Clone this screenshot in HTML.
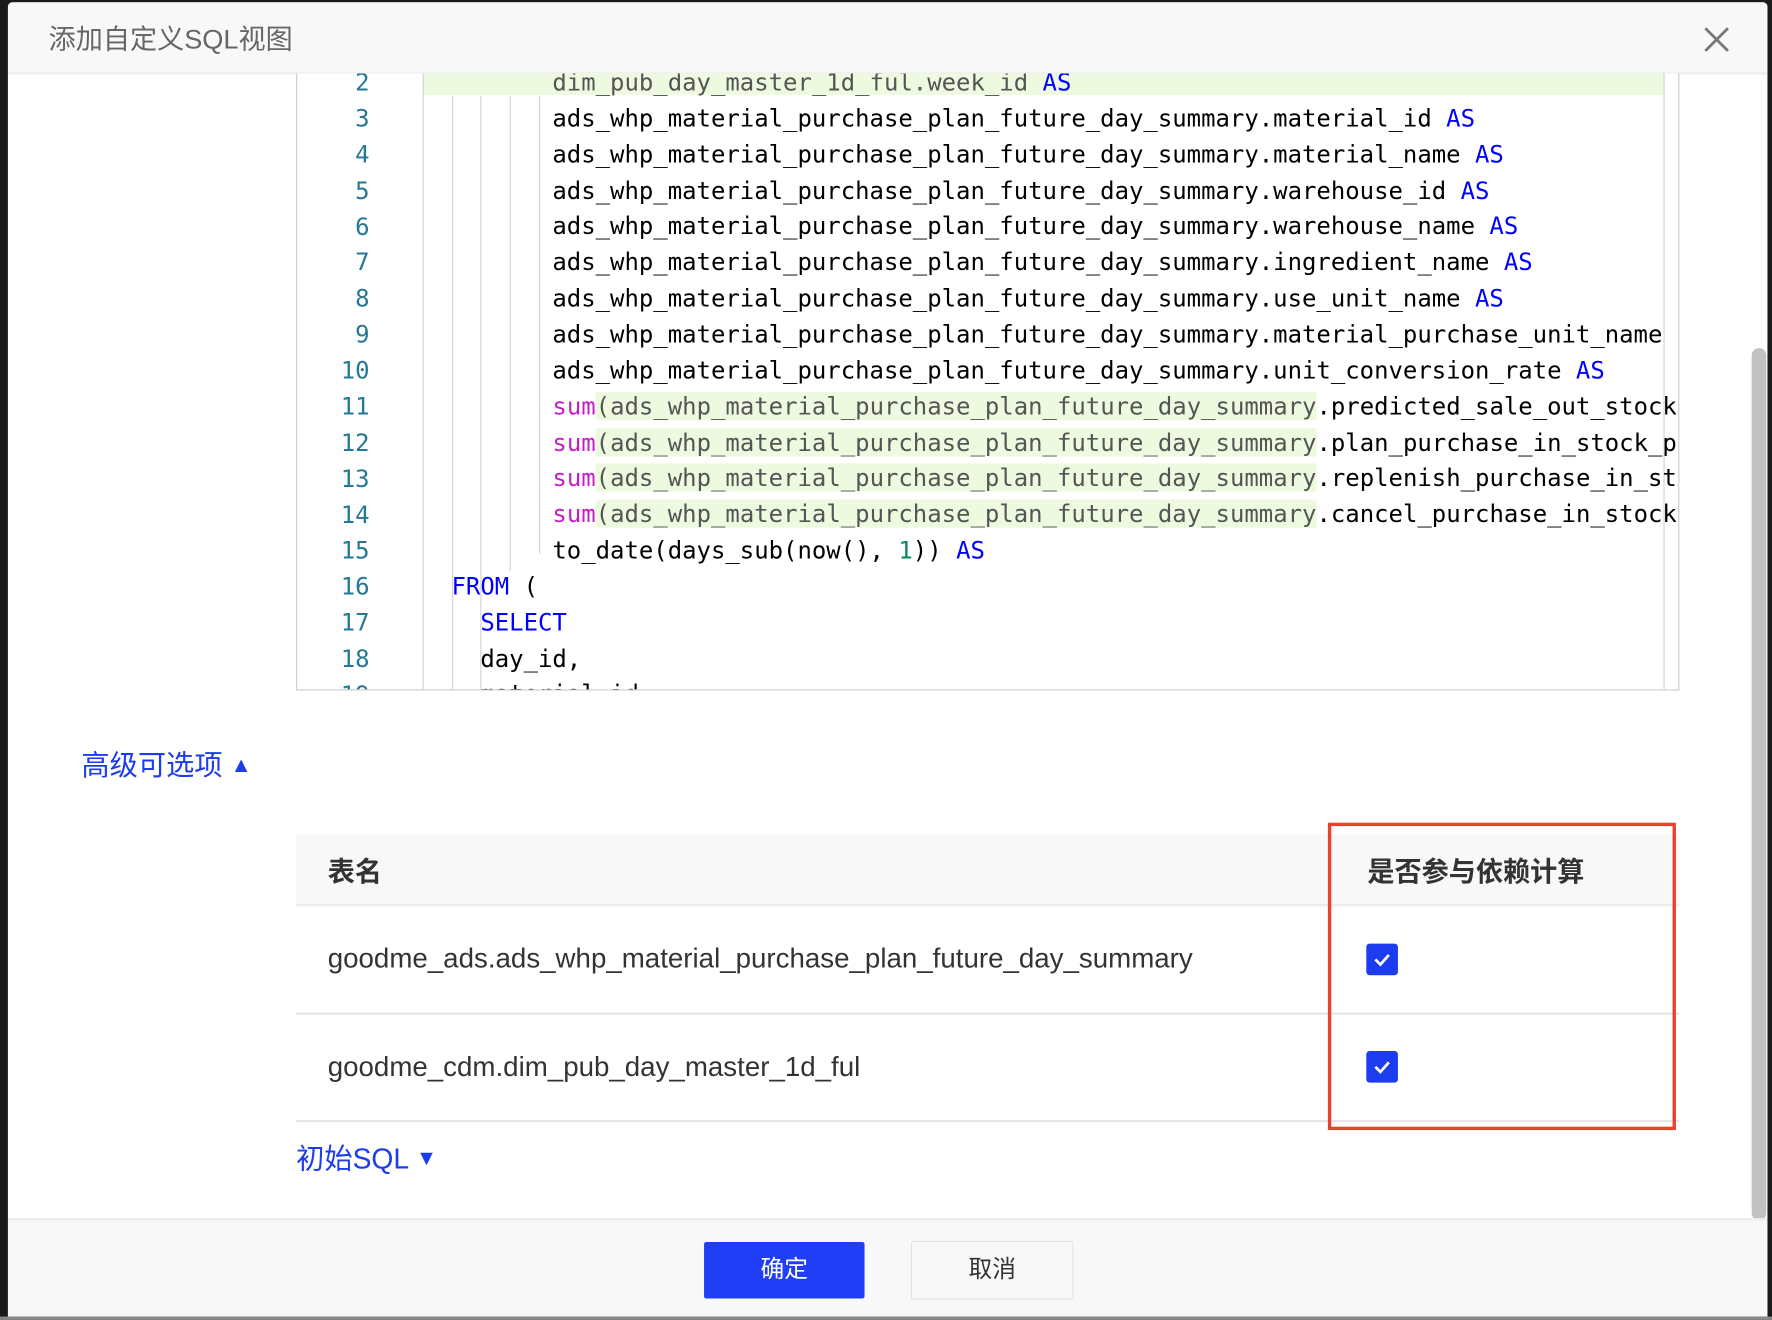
<!DOCTYPE html>
<html><head><meta charset="utf-8"><style>
html,body{margin:0;padding:0;width:1772px;height:1320px;overflow:hidden;background:#6b6b6b;}
#w{position:absolute;left:0;top:0;width:1568px;height:1168px;transform:scale(1.13010);transform-origin:0 0;background:#1a1a1a;font-family:"Liberation Sans","Noto Sans CJK SC",sans-serif;}
.dlg{position:absolute;left:7px;top:2px;width:1557px;height:1163px;background:#fff;border-radius:4px 4px 0 0;overflow:hidden;}
.hd{position:absolute;left:0;top:0;right:0;height:62px;background:#f8f8f9;border-bottom:2px solid #eee;}
.hd .t{position:absolute;left:36px;top:13px;font-size:24px;color:#666;}
.x{position:absolute;left:1500px;top:21px;}
.ed{position:absolute;left:255px;top:63px;width:1222px;height:545px;border:1px solid #ccc;border-top:none;overflow:hidden;background:#fff;}
.ln{position:absolute;left:0;width:64px;text-align:right;font-family:"DejaVu Sans Mono",monospace;font-size:21.2px;color:#237893;}
.code{position:absolute;left:111px;top:0;right:0;bottom:0;}
.row{position:absolute;left:0;white-space:pre;font-family:"DejaVu Sans Mono",monospace;font-size:21.2px;color:#000;height:32px;line-height:32px;}
.k{color:#0000ff}.f{color:#c61cc6}.n{color:#098658}.g{background:#eefadf;color:#555}
.gd{position:absolute;top:0;bottom:0;width:1px;background:#d3d3d3;}
.blue{color:#1d3cf0;font-size:25px;position:absolute;}
.tbl{position:absolute;left:255px;top:736px;width:1224px;}
.th{height:62px;background:#f8f8f9;border-bottom:2px solid #ebebeb;position:relative;font-weight:bold;font-size:24px;color:#333;}
.tr{height:93px;border-bottom:2px solid #e5e5e5;position:relative;font-size:24.5px;color:#333;}
.c1{position:absolute;left:28px;top:50%;transform:translateY(-50%);}
.c2{position:absolute;left:948px;top:50%;transform:translateY(-50%);}
.cb{position:absolute;left:947px;width:28px;height:28px;background:#1d3cf0;border-radius:3px;}
.ft{position:absolute;left:0;right:0;top:1076px;bottom:0;background:#f8f8f9;border-top:2px solid #eee;}
.btn{position:absolute;top:19px;height:50px;width:142px;text-align:center;line-height:50px;font-size:21px;border-radius:2px;}
</style></head><body><div id="w">
<div class="dlg">
<div class="hd"><div class="t">添加自定义SQL视图</div>
<svg class="x" width="24" height="24" viewBox="0 0 24 24"><path d="M2 2L22 22M22 2L2 22" stroke="#777" stroke-width="2.4"/></svg></div>
<div class="ed">
<div style="position:absolute;left:111px;top:-7px;width:1098px;height:26px;background:#eefadf"></div>
<div class="gd" style="left:111px"></div><div class="gd" style="left:137px;top:20px"></div><div class="gd" style="left:162px;top:20px"></div><div class="gd" style="left:188px;top:20px;bottom:105px"></div><div class="gd" style="left:214px;top:20px;bottom:120px"></div>
<div class="gd" style="left:1209px"></div>
<div class="ln" style="top:-8px;line-height:31.87px">2<br>3<br>4<br>5<br>6<br>7<br>8<br>9<br>10<br>11<br>12<br>13<br>14<br>15<br>16<br>17<br>18<br>19</div>
<div class="code">
<div class="row" style="top:-8px;color:#555">         dim_pub_day_master_1d_ful.week_id <span class="k">AS</span></div>
<div class="row" style="top:24px">         ads_whp_material_purchase_plan_future_day_summary.material_id <span class="k">AS</span></div>
<div class="row" style="top:56px">         ads_whp_material_purchase_plan_future_day_summary.material_name <span class="k">AS</span></div>
<div class="row" style="top:88px">         ads_whp_material_purchase_plan_future_day_summary.warehouse_id <span class="k">AS</span></div>
<div class="row" style="top:119px">         ads_whp_material_purchase_plan_future_day_summary.warehouse_name <span class="k">AS</span></div>
<div class="row" style="top:151px">         ads_whp_material_purchase_plan_future_day_summary.ingredient_name <span class="k">AS</span></div>
<div class="row" style="top:183px">         ads_whp_material_purchase_plan_future_day_summary.use_unit_name <span class="k">AS</span></div>
<div class="row" style="top:215px">         ads_whp_material_purchase_plan_future_day_summary.material_purchase_unit_name</div>
<div class="row" style="top:247px">         ads_whp_material_purchase_plan_future_day_summary.unit_conversion_rate <span class="k">AS</span></div>
<div class="row" style="top:279px">         <span class="f">sum</span><span class="g">(ads_whp_material_purchase_plan_future_day_summary</span>.predicted_sale_out_stock</div>
<div class="row" style="top:311px">         <span class="f">sum</span><span class="g">(ads_whp_material_purchase_plan_future_day_summary</span>.plan_purchase_in_stock_p</div>
<div class="row" style="top:342px">         <span class="f">sum</span><span class="g">(ads_whp_material_purchase_plan_future_day_summary</span>.replenish_purchase_in_st</div>
<div class="row" style="top:374px">         <span class="f">sum</span><span class="g">(ads_whp_material_purchase_plan_future_day_summary</span>.cancel_purchase_in_stock</div>
<div class="row" style="top:406px">         to_date(days_sub(now(), <span class="n">1</span>)) <span class="k">AS</span></div>
<div class="row" style="top:438px">  <span class="k">FROM</span> (</div>
<div class="row" style="top:470px">    <span class="k">SELECT</span></div>
<div class="row" style="top:502px">    day_id,</div>
<div class="row" style="top:533px">    material_id,</div>
</div>
</div>
<div class="blue" style="left:65px;top:656px">高级可选项 <span style="font-size:19px;position:relative;top:-3px">▲</span></div>
<div class="tbl">
<div class="th"><div class="c1">表名</div><div class="c2">是否参与依赖计算</div></div>
<div class="tr" style="height:94px"><div class="c1">goodme_ads.ads_whp_material_purchase_plan_future_day_summary</div><div class="cb" style="top:33px"><svg width="28" height="28"><path d="M8 14L12.5 18.5L20 10" stroke="#fff" stroke-width="2.4" fill="none"/></svg></div></div>
<div class="tr"><div class="c1">goodme_cdm.dim_pub_day_master_1d_ful</div><div class="cb" style="top:32px"><svg width="28" height="28"><path d="M8 14L12.5 18.5L20 10" stroke="#fff" stroke-width="2.4" fill="none"/></svg></div></div>
</div>
<div style="position:absolute;left:1168px;top:726px;width:302px;height:266px;border:3px solid #e8412c"></div>
<div class="blue" style="left:255px;top:1004px">初始SQL <span style="font-size:19px;position:relative;top:-3px">▼</span></div>
<div style="position:absolute;left:1543px;top:306px;width:13px;height:772px;background:#c1c1c1;border-radius:7px"></div>
<div class="ft">
<div class="btn" style="left:616px;background:#1f3ef5;color:#fff">确定</div>
<div class="btn" style="left:799px;background:#f8f8f9;border:1px solid #e3e3e3;color:#333;height:50px;top:18px">取消</div>
</div>
</div>
<div style="position:absolute;left:0;top:1165px;width:1568px;height:3px;background:#888"></div>
</div></body></html>
